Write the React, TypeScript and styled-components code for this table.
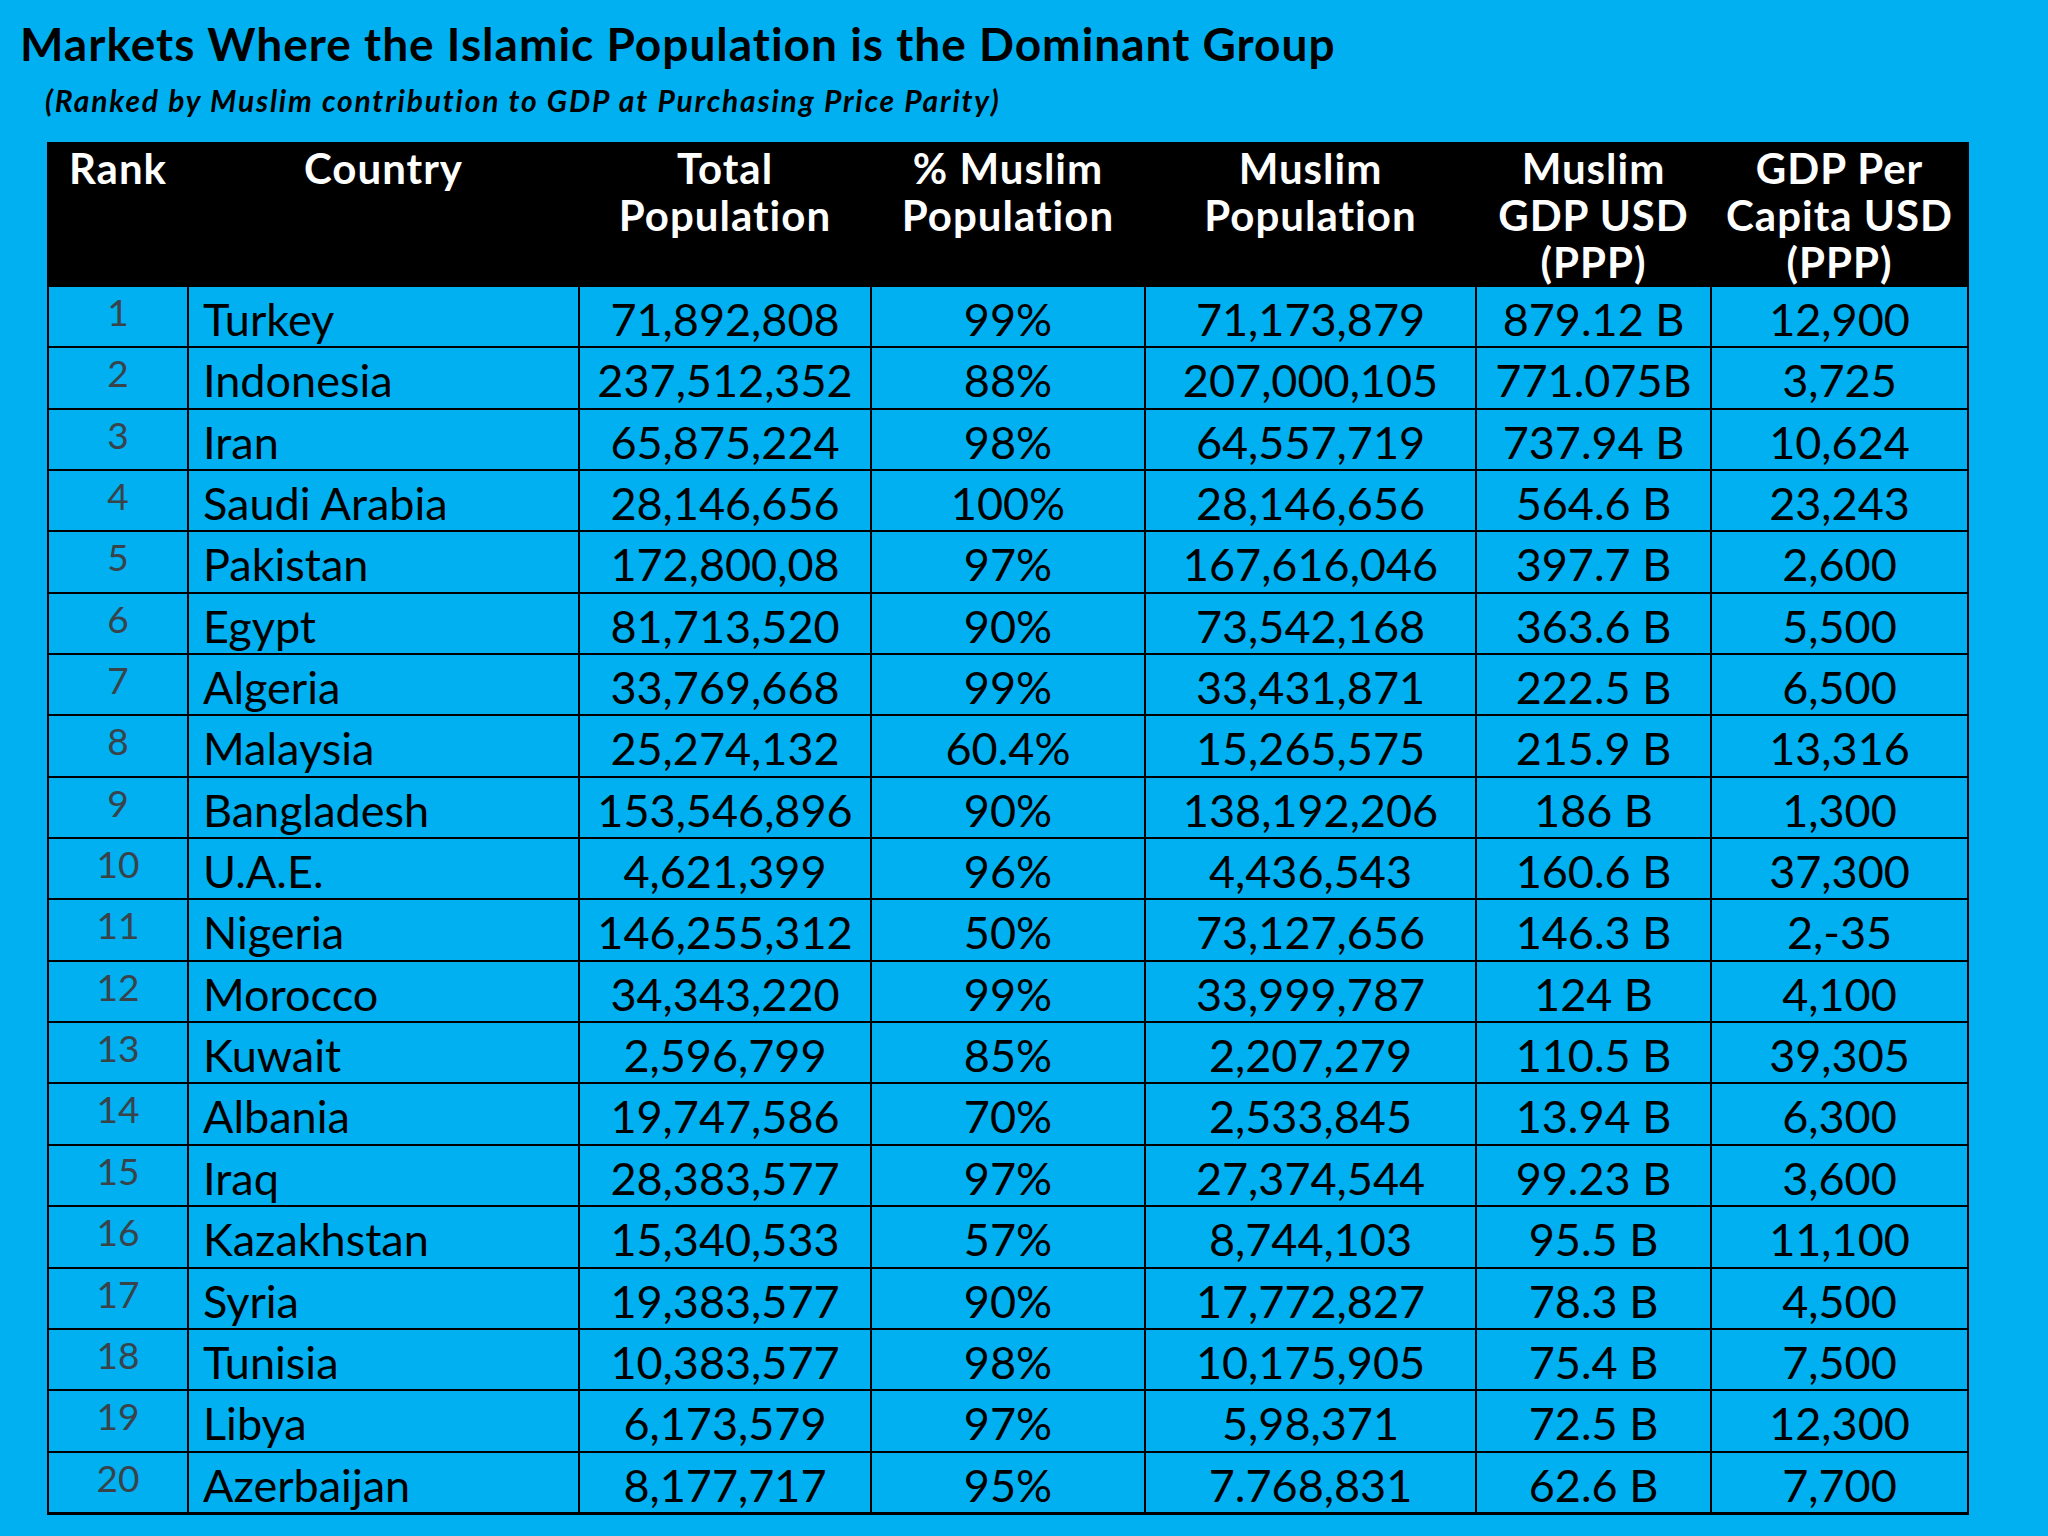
import React from "react";
import styled, { createGlobalStyle } from "styled-components";

const GlobalStyle = createGlobalStyle`
  html, body {
    margin: 0;
    padding: 0;
    background: #00b0f0;
  }
  body {
    font-family: Lato, "Open Sans", "Liberation Sans", sans-serif;
    color: #000;
  }
`;

const Page = styled.div`
  width: 2048px;
  min-height: 1536px;
  box-sizing: border-box;
  background: #00b0f0;
  padding-top: 17px;
`;

const Title = styled.h1`
  margin: 0;
  padding-left: 20px;
  font-family: Lato, "Liberation Sans", sans-serif;
  font-weight: 700;
  font-size: 46px;
  letter-spacing: 1px;
  line-height: 54px;
  color: #000;
`;

const Subtitle = styled.h2`
  margin: 11px 0 0;
  padding-left: 45px;
  font-family: Lato, "Liberation Sans", sans-serif;
  font-weight: 700;
  font-style: italic;
  font-size: 30px;
  letter-spacing: 1.8px;
  line-height: 36px;
  color: #000;
`;

const Grid = styled.div`
  margin: 24px 0 0 47px;
  width: 1922px;
  box-sizing: border-box;
  display: grid;
  grid-template-columns: 138px 389px 290px 272px 329px 233px 255px;
  grid-template-rows: 143px repeat(20, 59.35px);
  gap: 2px;
  padding: 0 2px 3px 2px;
  background: #000;
`;

const HeadCell = styled.div`
  background: #000;
  color: #fff;
  font-family: Lato, "Liberation Sans", sans-serif;
  font-weight: 700;
  font-size: 42px;
  letter-spacing: 1px;
  line-height: 47px;
  text-align: center;
  padding-top: 3px;
`;

const Cell = styled.div<{ $align?: "left" | "center" }>`
  background: #00b0f0;
  color: #000;
  font-family: Lato, "Liberation Sans", sans-serif;
  font-size: 45px;
  line-height: 55px;
  padding-top: 5px;
  text-align: ${(p) => p.$align ?? "center"};
  padding-left: ${(p) => (p.$align === "left" ? "14px" : "0")};
  white-space: nowrap;
  overflow: hidden;
`;

const RankCell = styled.div`
  background: #00b0f0;
  color: #38434a;
  font-family: Lato, "Liberation Sans", sans-serif;
  font-size: 37px;
  line-height: 37px;
  padding-top: 6px;
  text-align: center;
`;

const headers: string[][] = [
  ["Rank"],
  ["Country"],
  ["Total", "Population"],
  ["% Muslim", "Population"],
  ["Muslim", "Population"],
  ["Muslim", "GDP USD", "(PPP)"],
  ["GDP Per", "Capita USD", "(PPP)"],
];

const rows: [string, string, string, string, string, string][] = [
  ["Turkey", "71,892,808", "99%", "71,173,879", "879.12 B", "12,900"],
  ["Indonesia", "237,512,352", "88%", "207,000,105", "771.075B", "3,725"],
  ["Iran", "65,875,224", "98%", "64,557,719", "737.94 B", "10,624"],
  ["Saudi Arabia", "28,146,656", "100%", "28,146,656", "564.6 B", "23,243"],
  ["Pakistan", "172,800,08", "97%", "167,616,046", "397.7 B", "2,600"],
  ["Egypt", "81,713,520", "90%", "73,542,168", "363.6 B", "5,500"],
  ["Algeria", "33,769,668", "99%", "33,431,871", "222.5 B", "6,500"],
  ["Malaysia", "25,274,132", "60.4%", "15,265,575", "215.9 B", "13,316"],
  ["Bangladesh", "153,546,896", "90%", "138,192,206", "186 B", "1,300"],
  ["U.A.E.", "4,621,399", "96%", "4,436,543", "160.6 B", "37,300"],
  ["Nigeria", "146,255,312", "50%", "73,127,656", "146.3 B", "2,-35"],
  ["Morocco", "34,343,220", "99%", "33,999,787", "124 B", "4,100"],
  ["Kuwait", "2,596,799", "85%", "2,207,279", "110.5 B", "39,305"],
  ["Albania", "19,747,586", "70%", "2,533,845", "13.94 B", "6,300"],
  ["Iraq", "28,383,577", "97%", "27,374,544", "99.23 B", "3,600"],
  ["Kazakhstan", "15,340,533", "57%", "8,744,103", "95.5 B", "11,100"],
  ["Syria", "19,383,577", "90%", "17,772,827", "78.3 B", "4,500"],
  ["Tunisia", "10,383,577", "98%", "10,175,905", "75.4 B", "7,500"],
  ["Libya", "6,173,579", "97%", "5,98,371", "72.5 B", "12,300"],
  ["Azerbaijan", "8,177,717", "95%", "7.768,831", "62.6 B", "7,700"],
];

export default function App() {
  return (
    <>
      <GlobalStyle />
      <Page>
        <Title>Markets Where the Islamic Population is the Dominant Group</Title>
        <Subtitle>(Ranked by Muslim contribution to GDP at Purchasing Price Parity)</Subtitle>
        <Grid>
          {headers.map((lines, i) => (
            <HeadCell key={`h${i}`}>
              {lines.map((l, j) => (
                <div key={j}>{l}</div>
              ))}
            </HeadCell>
          ))}
          {rows.map((r, i) => (
            <React.Fragment key={`r${i}`}>
              <RankCell>{i + 1}</RankCell>
              <Cell $align="left">{r[0]}</Cell>
              <Cell>{r[1]}</Cell>
              <Cell>{r[2]}</Cell>
              <Cell>{r[3]}</Cell>
              <Cell>{r[4]}</Cell>
              <Cell>{r[5]}</Cell>
            </React.Fragment>
          ))}
        </Grid>
      </Page>
    </>
  );
}
